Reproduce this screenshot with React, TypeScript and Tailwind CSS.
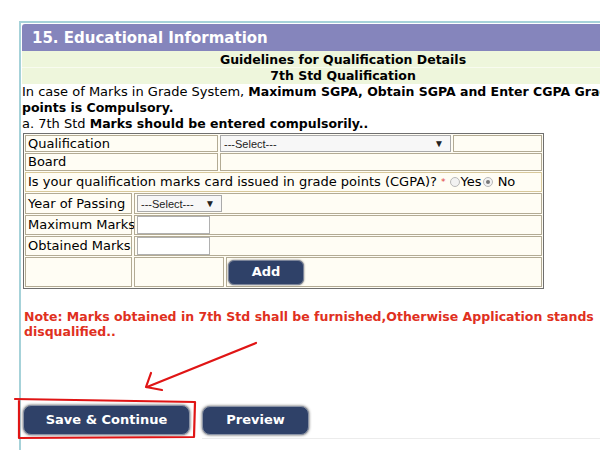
const cell = "border border-[#b3ab94] bg-[#fffdf4] flex items-center px-[2px]";

function FakeSelect({ width }: { width: string }) {
  return (
    <div
      className={`flex h-[17px] items-center justify-between border border-[#aaa] bg-[#f7f7f7] pl-[3px] pr-[6px] font-['Liberation_Sans',Arial,sans-serif] text-[11px] text-[#222] ${width}`}
    >
      <span>---Select---</span>
      <span className="text-[10px]">▼</span>
    </div>
  );
}

function Radio({ checked }: { checked?: boolean }) {
  return (
    <span className="mx-[1px] inline-flex h-[10px] w-[10px] items-center justify-center rounded-full border border-[#b8b8b8] bg-[#f2f2f2]">
      {checked ? <span className="h-[4px] w-[4px] rounded-full bg-[#777]" /> : null}
    </span>
  );
}

export default function App() {
  return (
    <div className="relative h-[450px] w-[600px] overflow-hidden bg-white font-['DejaVu_Sans',Verdana,sans-serif] text-[13px] leading-[16px] text-black">
      <div className="ml-[19px] mt-[21px] h-[440px] w-[645px] border-l-2 border-t-2 border-[#a6d2d9] pl-[1px] pt-[1px]">
        <div className="flex h-[27px] items-center rounded-tl-[3px] bg-[#8585bc] pl-[10px] text-[15px] font-bold text-white">
          15. Educational Information
        </div>

        <div className="bg-[#eef6dc] pt-[1px] text-center text-[12.5px] font-bold">
          <div className="h-[16px] border-b border-[#f8fbef]">Guidelines for Qualification Details</div>
          <div className="h-[16px]">7th Std Qualification</div>
        </div>

        <div className="whitespace-nowrap pb-[1px]">
          <div>
            In case of Marks in Grade System,{" "}
            <b className="text-[12.5px]">Maximum SGPA, Obtain SGPA and Enter CGPA Grade</b>
          </div>
          <div>
            <b className="text-[12.5px]">points is Compulsory.</b>
          </div>
          <div>
            a. 7th Std <b className="text-[12.5px]">Marks should be entered compulsorily..</b>
          </div>
        </div>

        <div className="ml-[1px] flex w-[521px] flex-col gap-[1px] border border-[#6f6f6f] bg-[#fffdf4] p-[1px]">
          <div className="flex h-[17px] gap-[2px]">
            <div className={`${cell} w-[193px]`}>Qualification</div>
            <FakeSelect width="w-[231px]" />
            <div className={`${cell} flex-1`} />
          </div>
          <div className="flex h-[18px] gap-[2px]">
            <div className={`${cell} w-[193px]`}>Board</div>
            <div className={`${cell} flex-1 border-[#9c9c9c]`} />
          </div>
          <div className="flex h-[20px]">
            <div className={`${cell} flex-1 whitespace-nowrap border-[#d8c89a]`}>
              Is your qualification marks card issued in grade points (CGPA)?
              <span className="ml-[4px] mr-[3px] text-[9px] text-[#e04040]">*</span>
              <Radio />
              Yes
              <Radio checked />
              &nbsp;No
            </div>
          </div>
          <div className="flex h-[21px] gap-[2px]">
            <div className={`${cell} w-[107px] whitespace-nowrap`}>Year of Passing</div>
            <div className={`${cell} flex-1 px-0`}>
              <FakeSelect width="w-[85px]" />
            </div>
          </div>
          <div className="flex h-[20px] gap-[2px]">
            <div className={`${cell} w-[107px] whitespace-nowrap`}>Maximum Marks</div>
            <div className={`${cell} flex-1 px-0`}>
              <div className="h-[18px] w-[73px] border border-[#b0b0b0] bg-white" />
            </div>
          </div>
          <div className="flex h-[20px] gap-[2px]">
            <div className={`${cell} w-[107px] whitespace-nowrap`}>Obtained Marks</div>
            <div className={`${cell} flex-1 px-0`}>
              <div className="h-[18px] w-[73px] border border-[#b0b0b0] bg-white" />
            </div>
          </div>
          <div className="flex h-[30px] gap-[2px]">
            <div className={`${cell} w-[107px]`} />
            <div className={`${cell} w-[90px]`} />
            <div className={`${cell} flex-1 pl-[1px]`}>
              <button className="h-[25px] w-[76px] rounded-[6px] border border-[#7b8499] bg-[#2f4168] text-[13px] font-bold text-white shadow-[0_0_2px_#666]">
                Add
              </button>
            </div>
          </div>
        </div>

        <div className="mt-[20px] whitespace-nowrap pl-[2px] text-[12.5px] font-bold leading-[15px] text-[#e0301e]">
          <div>Note: Marks obtained in 7th Std shall be furnished,Otherwise Application stands</div>
          <div>disqualified..</div>
        </div>

        <div className="mt-[66px] flex items-center gap-[12px] pl-[1px]">
          <button className="h-[30px] w-[167px] rounded-[8px] border border-[#8a93a6] bg-[#2f4168] text-[13px] font-bold text-white shadow-[0_0_3px_#555]">
            Save &amp; Continue
          </button>
          <button className="h-[29px] w-[107px] rounded-[8px] border border-[#8a93a6] bg-[#2f4168] text-[13px] font-bold text-white shadow-[0_0_3px_#555]">
            Preview
          </button>
        </div>
        <div className="ml-[180px] mt-[3px] h-[1px] bg-[#ececec]" />
      </div>

      <svg className="pointer-events-none absolute inset-0" width="600" height="450" viewBox="0 0 600 450">
        <g fill="none" stroke="#e01515" strokeWidth="2.2" strokeLinecap="round" strokeLinejoin="round">
          <path d="M15 399 L195 402 L194 437 L19 438 L19 400" />
          <path d="M256 343 L147 387" />
          <path d="M151 373 L146 387 L162 390" />
        </g>
      </svg>
    </div>
  );
}
